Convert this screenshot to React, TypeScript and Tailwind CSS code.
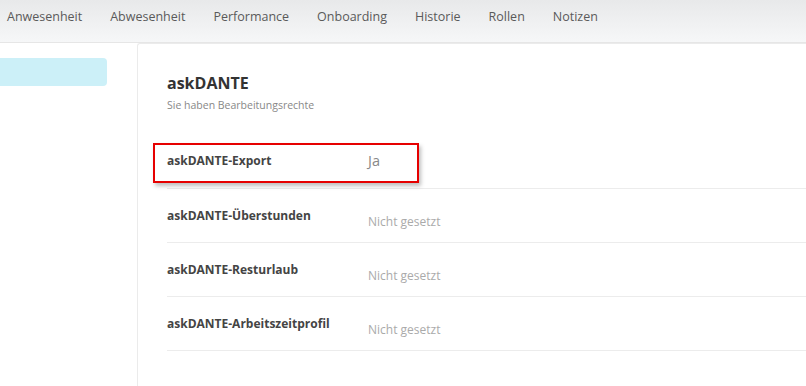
const tabs = ["Anwesenheit", "Abwesenheit", "Performance", "Onboarding", "Historie", "Rollen", "Notizen"]

const rows = [
  { label: "askDANTE-Überstunden", value: "Nicht gesetzt" },
  { label: "askDANTE-Resturlaub", value: "Nicht gesetzt" },
  { label: "askDANTE-Arbeitszeitprofil", value: "Nicht gesetzt" },
]

export default function App() {
  return (
    <div className="w-[806px] h-[386px] overflow-hidden bg-white font-['Open_Sans',sans-serif]">
      {/* Top tabs */}
      <div className="h-[43px] flex items-center gap-[28px] pl-[7px] pb-[8px] bg-gradient-to-b from-[#e8e9ea] to-[#f6f7f8] border-b border-[#e6e6e6] text-[12.5px] text-[#5a5a5a]">
        {tabs.map((t) => (
          <span key={t}>{t}</span>
        ))}
      </div>

      <div className="flex h-full">
        {/* Sidebar */}
        <div className="w-[137px] shrink-0 pt-[15px]">
          <div className="w-[107px] h-[28px] bg-[#ccf0f8] rounded-r-[4px]" />
        </div>

        {/* Card */}
        <div className="flex-1 border-l border-t border-[#ebebeb] rounded-tl-[3px] pl-[29px] pt-[28px]">
          <h2 className="text-[16px] leading-[22px] font-bold text-[#333]">askDANTE</h2>
          <p className="mt-[4px] text-[10.5px] leading-[14px] text-[#888]">Sie haben Bearbeitungsrechte</p>

          <div className="mt-[23px]">
            <div className="relative h-[54px] flex items-center border-b border-[#ececec] pb-[2px]">
              <div className="w-[201px] shrink-0 text-[12px] leading-[16px] font-bold text-[#444]">askDANTE-Export</div>
              <div className="text-[14.5px] leading-[18px] text-[#888]">Ja</div>
              <div className="absolute left-[-14px] top-[8px] w-[266px] h-[40px] border-2 border-[#e60000] shadow-[2px_3px_4px_rgba(0,0,0,0.25)]" />
            </div>
            {rows.map((r) => (
              <div key={r.label} className="h-[54px] flex items-start pt-[19px] border-b border-[#ececec]">
                <div className="w-[201px] shrink-0 text-[12px] leading-[16px] font-bold text-[#444]">{r.label}</div>
                <div className="mt-[6px] text-[12px] leading-[16px] text-[#aaa]">{r.value}</div>
              </div>
            ))}
          </div>
        </div>
      </div>
    </div>
  )
}
